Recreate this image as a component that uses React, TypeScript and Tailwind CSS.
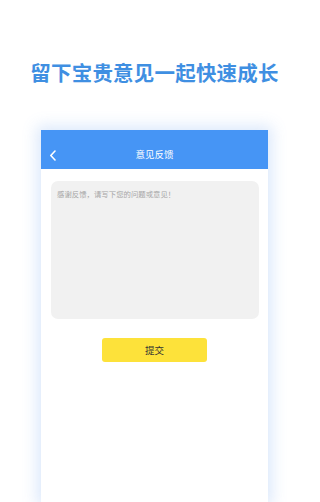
import React from "react";

export default function App() {
  const cjk = { fontFamily: '"Noto Sans CJK SC", "Noto Sans", sans-serif' };
  return (
    <div className="w-[309px] h-[502px] bg-white overflow-hidden flex flex-col" style={cjk}>
      <div className="h-[130px] flex justify-center pt-[58px]">
        <h1 className="text-[20.5px] leading-[28px] font-semibold text-[#3f8fe2] tracking-[0.2px]">留下宝贵意见一起快速成长</h1>
      </div>
      <div className="w-[227px] mx-auto flex-1 bg-white flex flex-col shadow-[0_0_14px_4px_rgba(90,150,235,0.22)]">
        <div className="h-[39px] bg-[#4695f5] pt-[11px]">
          <div className="relative h-[28px] flex items-center justify-center">
            <svg className="absolute left-[8px] top-[9px]" width="8" height="11" viewBox="0 0 8 11" fill="none">
              <path d="M6 1 L1.8 5.5 L6 10" stroke="white" strokeWidth="1.6" strokeLinecap="round" strokeLinejoin="round" />
            </svg>
            <span className="text-white text-[9.5px] leading-none">意见反馈</span>
          </div>
        </div>
        <div className="ml-[10px] mt-[12px] w-[208px] h-[138px] rounded-[7px] bg-[#f1f1f1] px-[6px] pt-[8px]">
          <p className="text-[7.4px] leading-[10px] text-[#a6a6a6]">感谢反馈，请写下您的问题或意见！</p>
        </div>
        <div className="mt-[19px] flex justify-center">
          <button className="w-[105px] h-[24px] rounded-[3px] bg-[#fde23a] text-[#333] text-[9.5px] flex items-center justify-center">提交</button>
        </div>
      </div>
    </div>
  );
}
